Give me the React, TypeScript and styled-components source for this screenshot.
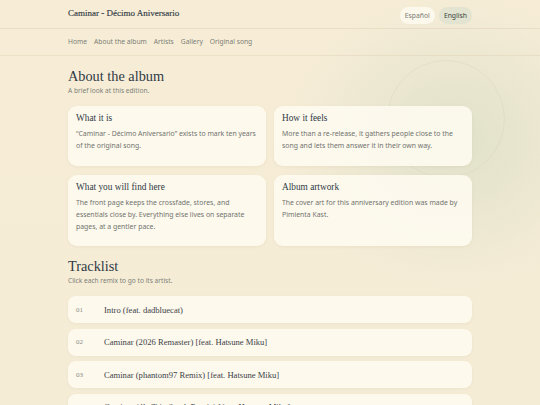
import React from "react";
import styled, { createGlobalStyle } from "styled-components";

const Global = createGlobalStyle`
  html, body { margin: 0; padding: 0; }
  body {
    width: 540px;
    min-height: 405px;
    overflow: hidden;
    background-color: #f6ecd6;
    background-image:
      radial-gradient(ellipse 170px 150px at 455px 140px, rgba(214, 220, 196, 0.7), rgba(214, 220, 196, 0) 100%),
      linear-gradient(180deg, #f7edd7 0%, #f5ecd6 100%);
    font-family: "Noto Sans", "Open Sans", sans-serif;
    color: #2f3a45;
  }
  * { box-sizing: border-box; }
`;

const Page = styled.div`
  position: relative;
  width: 540px;
  height: 405px;
  overflow: hidden;
`;

const Ring = styled.div`
  position: absolute;
  left: 387px;
  top: 60px;
  width: 118px;
  height: 118px;
  border-radius: 50%;
  border: 1px solid rgba(190, 196, 170, 0.22);
  pointer-events: none;
`;

const Inner = styled.div`
  position: relative;
  width: 404px;
  margin: 0 auto;
`;

const HeaderBar = styled.header`
  border-bottom: 1px solid rgba(220, 205, 175, 0.45);
`;

const HeaderRow = styled.div`
  height: 28px;
  display: flex;
  align-items: center;
  justify-content: space-between;
`;

const SiteTitle = styled.div`
  margin-bottom: 2px;
  font-family: "Liberation Serif", "DejaVu Serif", serif;
  font-size: 9px;
  font-weight: 400;
  color: #2f3942;
  -webkit-text-stroke: 0.15px #2f3942;
`;

const Langs = styled.div`
  display: flex;
  gap: 4px;
  margin-top: 2px;
`;

const Pill = styled.button<{ $active?: boolean }>`
  height: 17px;
  padding: 0 5px;
  border: none;
  border-radius: 9px;
  font-family: "Noto Sans", sans-serif;
  font-size: 6.8px;
  color: ${(p) => (p.$active ? "#3b4440" : "#7a7c76")};
  background: ${(p) => (p.$active ? "#e2e3d0" : "#fcf8ec")};
`;

const NavBar = styled.nav`
  border-bottom: 1px solid rgba(220, 205, 175, 0.4);
`;

const NavRow = styled.div`
  height: 26px;
  display: flex;
  align-items: center;
  gap: 7px;
  padding-bottom: 1px;
`;

const NavLink = styled.a`
  font-size: 6.7px;
  color: #7b7e76;
  text-decoration: none;
`;

const Section = styled.section<{ $top: number }>`
  padding-top: ${(p) => p.$top}px;
`;

const H2 = styled.h2`
  margin: 0;
  font-family: "Liberation Serif", "DejaVu Serif", serif;
  font-weight: 400;
  font-size: 14.3px;
  line-height: 18px;
  color: #2f3a45;
`;

const Lead = styled.p`
  margin: 0;
  font-size: 6.6px;
  line-height: 12px;
  color: #7d7f78;
`;

const Grid = styled.div`
  margin-top: 9px;
  display: grid;
  grid-template-columns: 1fr 1fr;
  gap: 9px 8px;
`;

const Card = styled.div<{ $h: number }>`
  height: ${(p) => p.$h}px;
  padding: 5px 8px;
  border-radius: 9px;
  background: rgba(254, 251, 240, 0.88);
  box-shadow: 0 1px 3px rgba(180, 160, 120, 0.12);
`;

const CardTitle = styled.h3`
  margin: 0;
  font-family: "Liberation Serif", "DejaVu Serif", serif;
  font-weight: 400;
  font-size: 9.3px;
  line-height: 14px;
  color: #2f3a45;
`;

const CardText = styled.p`
  margin: 3px 0 0;
  font-size: 6.9px;
  line-height: 12px;
  color: #71746f;
`;

const Tracks = styled.ol`
  list-style: none;
  margin: 9px 0 0;
  padding: 0;
  display: flex;
  flex-direction: column;
  gap: 5.6px;
`;

const Track = styled.li`
  height: 27px;
  flex-shrink: 0;
  display: flex;
  align-items: center;
  padding: 0 8px;
  border-radius: 8px;
  background: rgba(254, 251, 240, 0.9);
  box-shadow: 0 1px 3px rgba(180, 160, 120, 0.1);
`;

const Num = styled.span`
  width: 28px;
  font-family: "Liberation Serif", "DejaVu Serif", serif;
  font-size: 7px;
  color: #8a8c86;
`;

const TrackName = styled.span`
  font-family: "Liberation Serif", "DejaVu Serif", serif;
  font-size: 8.6px;
  color: #3c4248;
`;

const cards = [
  {
    t: "What it is",
    d: "\u201cCaminar - D\u00e9cimo Aniversario\u201d exists to mark ten years of the original song.",
    h: 60,
  },
  {
    t: "How it feels",
    d: "More than a re-release, it gathers people close to the song and lets them answer it in their own way.",
    h: 60,
  },
  {
    t: "What you will find here",
    d: "The front page keeps the crossfade, stores, and essentials close by. Everything else lives on separate pages, at a gentler pace.",
    h: 71,
  },
  {
    t: "Album artwork",
    d: "The cover art for this anniversary edition was made by Pimienta Kast.",
    h: 71,
  },
];

const tracks = [
  "Intro (feat. dadbluecat)",
  "Caminar (2026 Remaster) [feat. Hatsune Miku]",
  "Caminar (phantom97 Remix) [feat. Hatsune Miku]",
  "Caminar (4lu Trip Synth Remix) [feat. Hatsune Miku]",
];

export default function App() {
  return (
    <Page>
      <Global />
      <Ring />
      <HeaderBar>
        <Inner>
          <HeaderRow>
            <SiteTitle>Caminar - Décimo Aniversario</SiteTitle>
            <Langs>
              <Pill>Español</Pill>
              <Pill $active>English</Pill>
            </Langs>
          </HeaderRow>
        </Inner>
      </HeaderBar>
      <NavBar>
        <Inner>
          <NavRow>
            <NavLink>Home</NavLink>
            <NavLink>About the album</NavLink>
            <NavLink>Artists</NavLink>
            <NavLink>Gallery</NavLink>
            <NavLink>Original song</NavLink>
          </NavRow>
        </Inner>
      </NavBar>
      <Inner>
        <Section $top={11}>
          <H2>About the album</H2>
          <Lead>A brief look at this edition.</Lead>
          <Grid>
            {cards.map((c) => (
              <Card key={c.t} $h={c.h}>
                <CardTitle>{c.t}</CardTitle>
                <CardText>{c.d}</CardText>
              </Card>
            ))}
          </Grid>
        </Section>
        <Section $top={11}>
          <H2>Tracklist</H2>
          <Lead>Click each remix to go to its artist.</Lead>
          <Tracks>
            {tracks.map((t, i) => (
              <Track key={t}>
                <Num>{String(i + 1).padStart(2, "0")}</Num>
                <TrackName>{t}</TrackName>
              </Track>
            ))}
          </Tracks>
        </Section>
      </Inner>
    </Page>
  );
}
